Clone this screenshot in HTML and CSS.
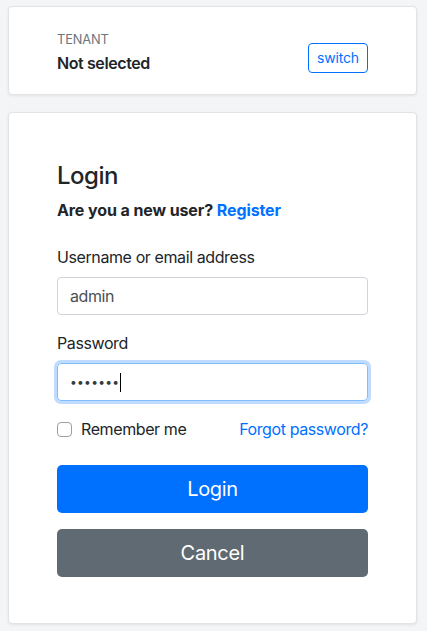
FILE: index.html
```html
<!DOCTYPE html>
<html lang="en">
<head>
<meta charset="utf-8">
<title>Login</title>
<link rel="stylesheet" href="styles.css">
</head>
<body>
<div class="page">
  <div class="card tenant-card">
    <div class="tenant-info">
      <div class="tenant-label">TENANT</div>
      <div class="tenant-name">Not selected</div>
    </div>
    <button class="btn-switch" type="button">switch</button>
  </div>

  <div class="card login-card">
    <h4 class="title">Login</h4>
    <p class="register">Are you a new user? <a href="#" class="link">Register</a></p>

    <div class="field">
      <label class="label">Username or email address</label>
      <div class="input">admin</div>
    </div>
    <div class="field">
      <label class="label">Password</label>
      <div class="input input-focus"><span class="dots">•••••••</span><span class="caret"></span></div>
    </div>

    <div class="options">
      <label class="check"><span class="checkbox"></span>Remember me</label>
      <a href="#" class="link forgot">Forgot password?</a>
    </div>

    <div class="actions">
      <button class="btn btn-primary" type="button">Login</button>
      <button class="btn btn-secondary" type="button">Cancel</button>
    </div>
  </div>
</div>
</body>
</html>
```
FILE: styles.css
```css
* { box-sizing: border-box; }
html, body { margin: 0; padding: 0; }
body {
  background: #f4f5f7;
  font-family: Inter, "Helvetica Neue", Arial, sans-serif;
  color: #212529;
  font-size: 16px;
  line-height: 1.5;
  letter-spacing: -0.4px;
}
.page {
  padding: 6px 10px 6px 8px;
  display: flex;
  flex-direction: column;
  gap: 17px;
}
.card {
  background: #fff;
  border: 1px solid #e2e3e5;
  border-radius: 4px;
  box-shadow: 0 1px 3px rgba(0,0,0,0.08);
}
.tenant-card {
  display: flex;
  justify-content: space-between;
  align-items: flex-start;
  padding: 23px 48px 18px 48px;
  height: 89px;
}
.tenant-label {
  font-size: 12.8px;
  color: #6c757d;
  line-height: 19px;
  letter-spacing: -0.1px;
}
.tenant-name {
  font-weight: 600;
  font-size: 16px;
  line-height: 24px;
  margin-top: 2px;
}
.btn-switch {
  margin-top: 13px;
  font-family: inherit;
  font-size: 14px;
  line-height: 20px;
  letter-spacing: -0.2px;
  padding: 4px 8px;
  color: #0070ff;
  background: #fff;
  border: 1px solid #0070ff;
  border-radius: 4px;
  height: 30px;
  width: 60px;
}
.login-card {
  padding: 48px 48px 46px 48px;
}
.title {
  margin: 0 0 8px 0;
  font-size: 24px;
  font-weight: 500;
  line-height: 29px;
  letter-spacing: -0.5px;
}
.register {
  margin: 0 0 23px 0;
  font-weight: 700;
  letter-spacing: -0.1px;
}
.link {
  color: #0070ff;
  text-decoration: none;
}
.field { margin-bottom: 16px; }
.label {
  display: block;
  margin-bottom: 8px;
}
.input {
  height: 38px;
  border: 1px solid #ced4da;
  border-radius: 4px;
  padding: 6px 12px;
  color: #495057;
  display: flex;
  align-items: center;
}
.input-focus {
  border-color: #80bdff;
  box-shadow: 0 0 0 3px rgba(0,112,255,0.25);
}
.dots {
  letter-spacing: 0.3px;
  font-size: 12px;
  color: #343a40;
}
.caret {
  display: inline-block;
  width: 1px;
  height: 19px;
  background: #000;
  margin-left: 1px;
}
.options {
  display: flex;
  justify-content: space-between;
  align-items: center;
  margin-bottom: 24px;
}
.check {
  display: flex;
  align-items: center;
  gap: 9px;
}
.checkbox {
  width: 15px;
  height: 15px;
  border: 1px solid #9aa0a6;
  border-radius: 4px;
  background: #fff;
}
.actions {
  display: flex;
  flex-direction: column;
  gap: 16px;
}
.btn {
  height: 48px;
  border: none;
  border-radius: 5px;
  font-family: inherit;
  font-size: 20px;
  letter-spacing: -0.3px;
  color: #fff;
  width: 100%;
}
.btn-primary { background: #0070ff; }
.btn-secondary { background: #606a72; }
```
